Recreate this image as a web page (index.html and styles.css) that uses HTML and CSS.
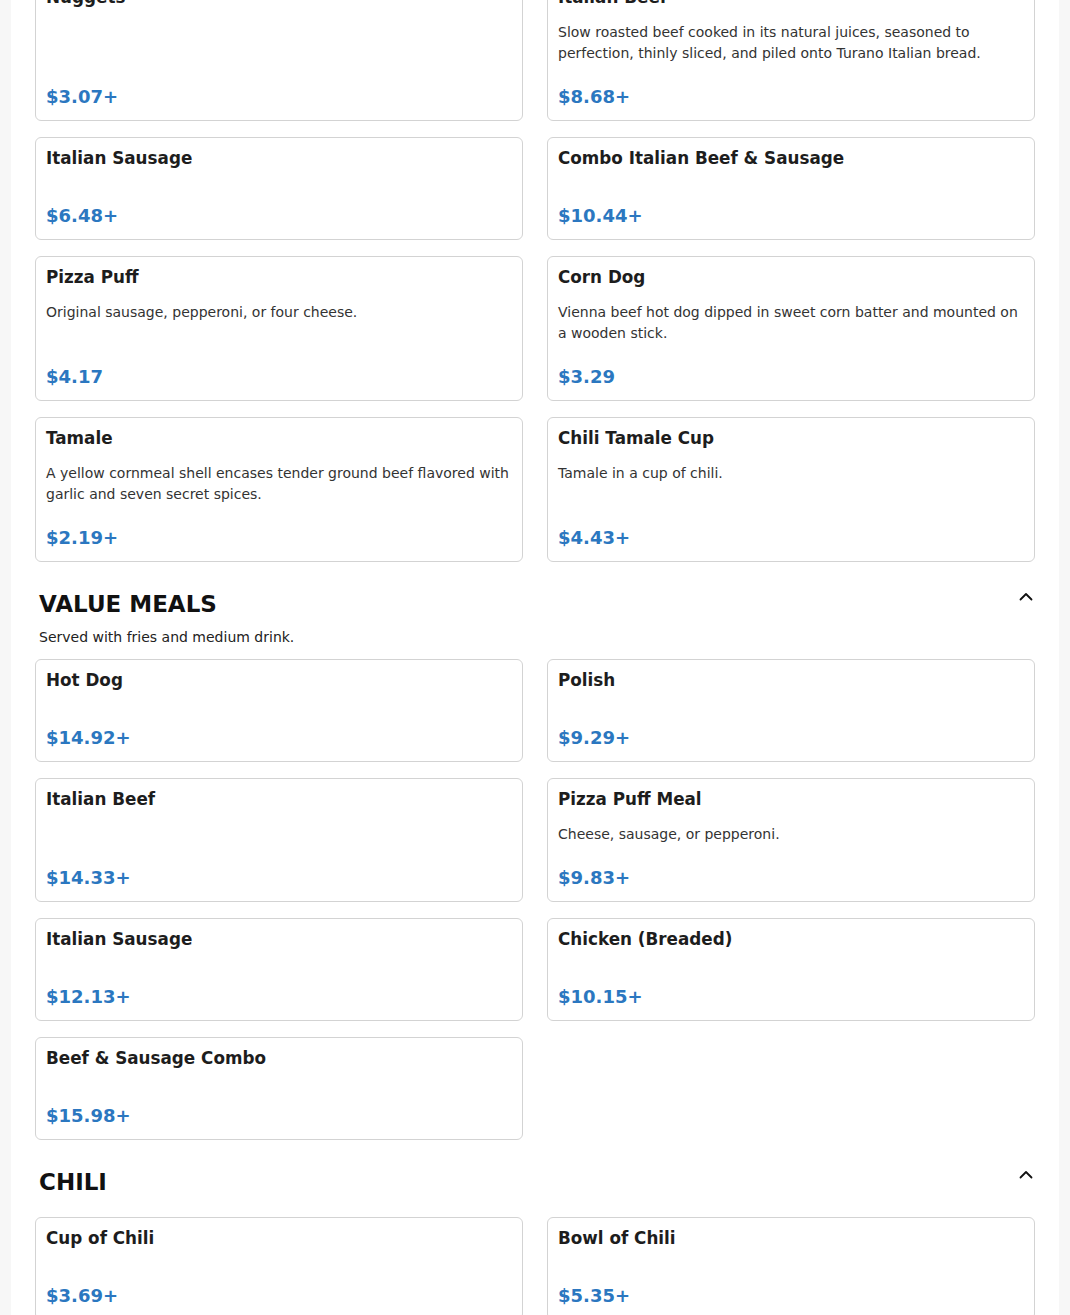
FILE: index.html
```html
<!DOCTYPE html>
<html lang="en">
<head>
<meta charset="utf-8">
<title>Menu</title>
<link rel="stylesheet" href="styles.css">
</head>
<body>
<main class="menu">
  <section class="section section--first">
    <div class="grid">
      <article class="card"><h3 class="card-title">Nuggets</h3><p class="card-desc"></p><div class="card-price">$3.07+</div></article>
      <article class="card"><h3 class="card-title">Italian Beef</h3><p class="card-desc">Slow roasted beef cooked in its natural juices, seasoned to perfection, thinly sliced, and piled onto Turano Italian bread.</p><div class="card-price">$8.68+</div></article>
      <article class="card"><h3 class="card-title">Italian Sausage</h3><p class="card-desc"></p><div class="card-price">$6.48+</div></article>
      <article class="card"><h3 class="card-title">Combo Italian Beef &amp; Sausage</h3><p class="card-desc"></p><div class="card-price">$10.44+</div></article>
      <article class="card"><h3 class="card-title">Pizza Puff</h3><p class="card-desc">Original sausage, pepperoni, or four cheese.</p><div class="card-price">$4.17</div></article>
      <article class="card"><h3 class="card-title">Corn Dog</h3><p class="card-desc">Vienna beef hot dog dipped in sweet corn batter and mounted on a wooden stick.</p><div class="card-price">$3.29</div></article>
      <article class="card"><h3 class="card-title">Tamale</h3><p class="card-desc">A yellow cornmeal shell encases tender ground beef flavored with garlic and seven secret spices.</p><div class="card-price">$2.19+</div></article>
      <article class="card"><h3 class="card-title">Chili Tamale Cup</h3><p class="card-desc">Tamale in a cup of chili.</p><div class="card-price">$4.43+</div></article>
    </div>
  </section>

  <section class="section">
    <header class="section-head">
      <div class="section-row">
        <h2 class="section-title">VALUE MEALS</h2>
        <button class="toggle" aria-label="Collapse"><svg viewBox="0 0 16 16" width="16" height="16"><path d="M2.5 10.5 L8 5 L13.5 10.5" fill="none" stroke="#111" stroke-width="1.8" stroke-linecap="round" stroke-linejoin="round"/></svg></button>
      </div>
      <p class="section-desc">Served with fries and medium drink.</p>
    </header>
    <div class="grid">
      <article class="card"><h3 class="card-title">Hot Dog</h3><p class="card-desc"></p><div class="card-price">$14.92+</div></article>
      <article class="card"><h3 class="card-title">Polish</h3><p class="card-desc"></p><div class="card-price">$9.29+</div></article>
      <article class="card"><h3 class="card-title">Italian Beef</h3><p class="card-desc"></p><div class="card-price">$14.33+</div></article>
      <article class="card"><h3 class="card-title">Pizza Puff Meal</h3><p class="card-desc">Cheese, sausage, or pepperoni.</p><div class="card-price">$9.83+</div></article>
      <article class="card"><h3 class="card-title">Italian Sausage</h3><p class="card-desc"></p><div class="card-price">$12.13+</div></article>
      <article class="card"><h3 class="card-title">Chicken (Breaded)</h3><p class="card-desc"></p><div class="card-price">$10.15+</div></article>
      <article class="card"><h3 class="card-title">Beef &amp; Sausage Combo</h3><p class="card-desc"></p><div class="card-price">$15.98+</div></article>
    </div>
  </section>

  <section class="section">
    <header class="section-head">
      <div class="section-row">
        <h2 class="section-title">CHILI</h2>
        <button class="toggle" aria-label="Collapse"><svg viewBox="0 0 16 16" width="16" height="16"><path d="M2.5 10.5 L8 5 L13.5 10.5" fill="none" stroke="#111" stroke-width="1.8" stroke-linecap="round" stroke-linejoin="round"/></svg></button>
      </div>
    </header>
    <div class="grid">
      <article class="card"><h3 class="card-title">Cup of Chili</h3><p class="card-desc"></p><div class="card-price">$3.69+</div></article>
      <article class="card"><h3 class="card-title">Bowl of Chili</h3><p class="card-desc"></p><div class="card-price">$5.35+</div></article>
    </div>
  </section>
</main>
</body>
</html>
```
FILE: styles.css
```css
html, body {
  margin: 0;
  padding: 0;
}
body {
  background: #f7f7f7;
  font-family: "DejaVu Sans", "Liberation Sans", sans-serif;
  color: #222;
}
.menu {
  margin: 0 11px;
  background: #fff;
  padding: 0 24px 40px;
  min-height: 1400px;
  display: flow-root;
}
.section {
  margin-top: 26px;
}
.section--first {
  margin-top: -24px;
}
.section-head {
  padding-bottom: 12px;
}
.section-row {
  display: flex;
  justify-content: space-between;
  align-items: flex-start;
  margin-bottom: 7px;
}
.section-title {
  margin: 0;
  padding-left: 4px;
  font-size: 23px;
  line-height: 32px;
  font-weight: 700;
  color: #111;
}
.toggle {
  background: none;
  border: 0;
  padding: 0;
  margin: 1px 1px 0 0;
  width: 16px;
  height: 16px;
  display: block;
}
.toggle svg {
  display: block;
}
.section-desc {
  margin: 0;
  padding-left: 4px;
  font-size: 14px;
  line-height: 20px;
  color: #222;
}
.grid {
  display: grid;
  grid-template-columns: 1fr 1fr;
  column-gap: 24px;
  row-gap: 16px;
}
.card {
  display: flex;
  flex-direction: column;
  border: 1px solid #d3d3d3;
  border-radius: 6px;
  padding: 10px 10px 10px 10px;
  background: #fff;
}
.card-title {
  margin: 0;
  font-size: 16.8px;
  line-height: 20px;
  font-weight: 700;
  color: #1d1d1d;
}
.card-desc {
  margin: 15px 0 20px;
  font-size: 14px;
  line-height: 21px;
  color: #333;
}
.card-price {
  margin-top: auto;
  font-size: 18px;
  line-height: 26px;
  font-weight: 700;
  color: #2b77c0;
}
```
